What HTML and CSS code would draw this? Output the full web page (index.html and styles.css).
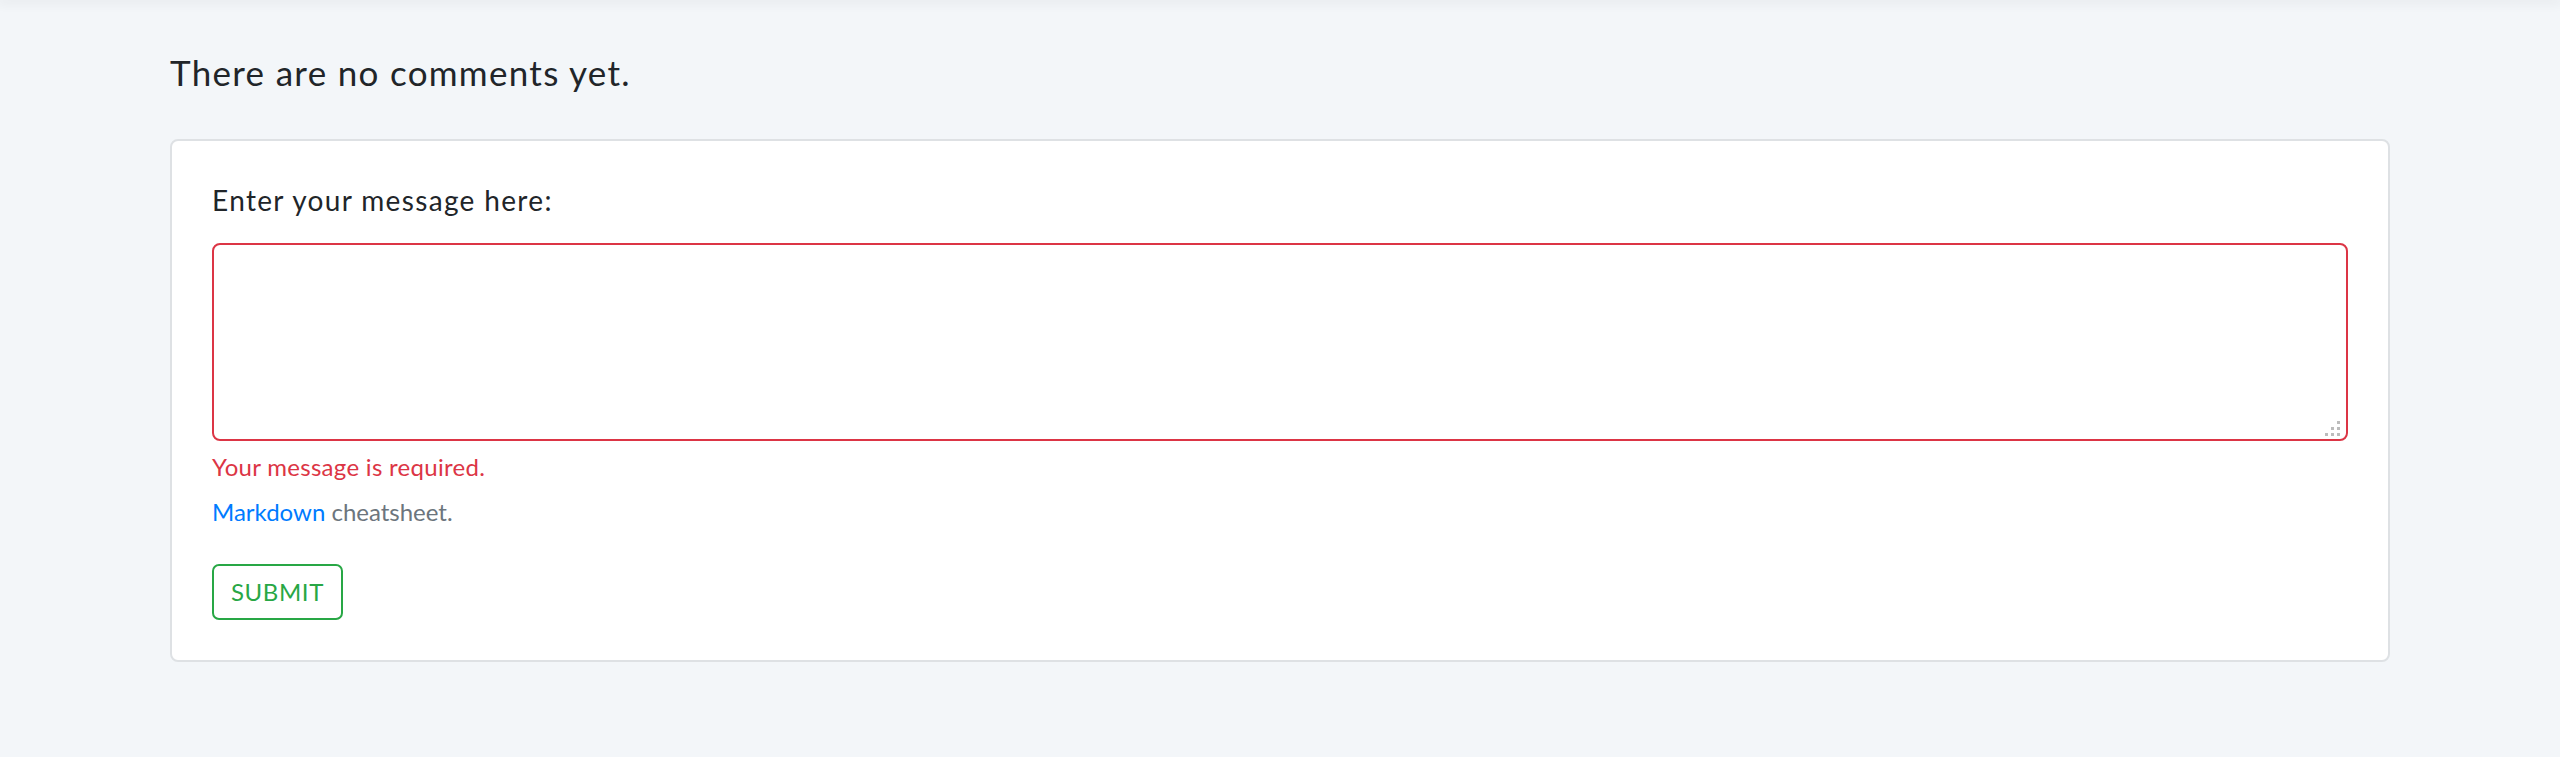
FILE: index.html
```html
<!DOCTYPE html>
<html lang="en">
<head>
  <meta charset="UTF-8">
  <meta name="viewport" content="width=device-width, initial-scale=1.0">
  <title>Comments</title>
  <link rel="stylesheet" href="styles.css">
</head>
<body>
  <div class="topbar"></div>
  <div class="container">
    <!-- Comment list (empty) -->
    <h5 class="comments-title">There are no comments yet.</h5>

    <!-- New comment form -->
    <div class="card">
      <form class="comment-form" novalidate>
        <label for="message" class="form-label">Enter your message here:</label>
        <div class="textarea-wrap">
          <textarea id="message" class="form-control is-invalid"></textarea>
          <svg class="grip" width="15" height="15" viewBox="0 0 15 15">
            <rect x="12" y="0" width="3" height="3"/>
            <rect x="6" y="6" width="3" height="3"/>
            <rect x="12" y="6" width="3" height="3"/>
            <rect x="0" y="12" width="3" height="3"/>
            <rect x="6" y="12" width="3" height="3"/>
            <rect x="12" y="12" width="3" height="3"/>
          </svg>
        </div>
        <div class="invalid-feedback">Your message is required.</div>
        <p class="form-hint"><a href="#">Markdown</a> cheatsheet.</p>
        <button type="button" class="btn-submit">SUBMIT</button>
      </form>
    </div>
  </div>
</body>
</html>
```

FILE: styles.css
```css
* { box-sizing: border-box; }
body {
  margin: 0;
  font-family: 'Lato', 'Liberation Sans', sans-serif;
  background: #f3f6f9;
  color: #212529;
}
.topbar {
  height: 0;
  box-shadow: 0 0 12px 3px rgba(0, 0, 0, 0.07);
}
.container {
  max-width: 2220px;
  margin: 0 auto;
}
.comments-title {
  margin: 51px 0 46px;
  font-size: 35px;
  font-weight: 400;
  line-height: 42px;
  letter-spacing: 1.3px;
}
.card {
  background: #fff;
  border: 2px solid #dee1e4;
  border-radius: 8px;
  padding: 38px 40px 40px;
}
.form-label {
  display: block;
  font-size: 28px;
  line-height: 42px;
  letter-spacing: 1.35px;
  margin-bottom: 22px;
}
.textarea-wrap {
  position: relative;
}
.form-control {
  display: block;
  width: 100%;
  height: 198px;
  border: 2px solid #ced4da;
  border-radius: 8px;
  font: inherit;
  font-size: 28px;
  padding: 10px 18px;
  resize: none;
}
.form-control.is-invalid {
  border-color: #dc3545;
}
/* resize handle */
.grip {
  position: absolute;
  right: 8px;
  bottom: 5px;
  fill: #bcbcbc;
}
.invalid-feedback {
  margin-top: 8px;
  font-size: 24px;
  line-height: 36px;
  letter-spacing: 0.3px;
  color: #dc3545;
}
.form-hint {
  margin: 9px 0 34px;
  font-size: 24px;
  line-height: 36px;
  color: #6c757d;
}
.form-hint a {
  color: #007bff;
  text-decoration: none;
}
.btn-submit {
  display: block;
  font-family: inherit;
  font-size: 24px;
  line-height: 34px;
  letter-spacing: 0.6px;
  padding: 9px 17px;
  color: #28a745;
  background: transparent;
  border: 2px solid #28a745;
  border-radius: 7px;
  cursor: pointer;
}
```
